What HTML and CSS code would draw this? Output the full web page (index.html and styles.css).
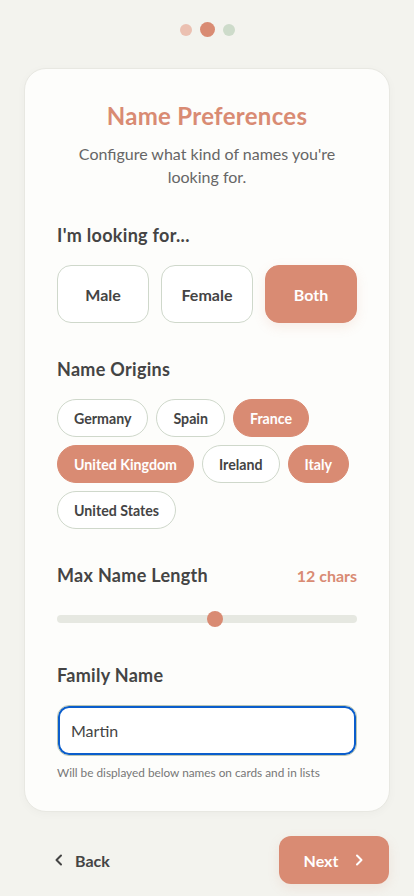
FILE: index.html
```html
<!DOCTYPE html>
<html lang="en">
<head>
    <meta charset="UTF-8">
    <meta name="viewport" content="width=device-width, initial-scale=1.0">
    <title>Name Preferences</title>
    <link rel="stylesheet" href="styles.css">
</head>
<body>
    <div class="steps">
        <span class="dot done"></span>
        <span class="dot current"></span>
        <span class="dot"></span>
    </div>

    <div class="card">
        <h1>Name Preferences</h1>
        <p class="subtitle">Configure what kind of names you're looking for.</p>

        <div class="section">
            <h2>I'm looking for...</h2>
            <div class="gender-options">
                <button class="gender-btn">Male</button>
                <button class="gender-btn">Female</button>
                <button class="gender-btn active">Both</button>
            </div>
        </div>

        <div class="section">
            <h2>Name Origins</h2>
            <div class="chips">
                <button class="chip">Germany</button>
                <button class="chip">Spain</button>
                <button class="chip active">France</button>
                <button class="chip active">United Kingdom</button>
                <button class="chip">Ireland</button>
                <button class="chip active">Italy</button>
                <button class="chip">United States</button>
            </div>
        </div>

        <div class="section">
            <div class="section-head">
                <h2>Max Name Length</h2>
                <span class="length-value" id="length-value">12 chars</span>
            </div>
            <input type="range" class="slider" id="length" min="3" max="20" value="12">
        </div>

        <div class="section family">
            <h2>Family Name</h2>
            <input type="text" class="text-input" value="Martin">
            <p class="hint">Will be displayed below names on cards and in lists</p>
        </div>
    </div>

    <div class="footer">
        <button class="back-btn">
            <svg width="14" height="14" viewBox="0 0 14 14"><polyline points="9,2.5 4.5,7 9,11.5" fill="none" stroke="currentColor" stroke-width="2" stroke-linecap="round" stroke-linejoin="round"/></svg>
            Back
        </button>
        <button class="next-btn">
            Next
            <svg width="14" height="14" viewBox="0 0 14 14"><polyline points="5,2.5 9.5,7 5,11.5" fill="none" stroke="currentColor" stroke-width="2" stroke-linecap="round" stroke-linejoin="round"/></svg>
        </button>
    </div>

    <script>
        // Keep the length label in sync with the slider
        const lengthInput = document.getElementById('length');
        const lengthValue = document.getElementById('length-value');
        lengthInput.addEventListener('input', () => {
            lengthValue.textContent = `${lengthInput.value} chars`;
        });
    </script>
</body>
</html>
```

FILE: styles.css
```css
body {
    font-family: 'Lato', 'Noto Sans', sans-serif;
    background-color: #f3f3ee;
    margin: 0;
    padding: 22px 24px 12px;
    color: #444;
}

button {
    font-family: inherit;
    cursor: pointer;
}

.steps {
    display: flex;
    justify-content: center;
    align-items: center;
    gap: 8px;
    height: 15px;
    margin-bottom: 31px;
}

.dot {
    width: 12px;
    height: 12px;
    border-radius: 50%;
    background-color: #cddbca;
}

.dot.done {
    background-color: #ebc0b1;
}

.dot.current {
    width: 15px;
    height: 15px;
    background-color: #d98b73;
}

.card {
    background-color: #fdfdfb;
    border: 1px solid #e8e8e2;
    border-radius: 22px;
    padding: 32px 32px 30px;
    box-shadow: 0 2px 10px rgba(0, 0, 0, 0.03);
}

h1 {
    margin: 0;
    text-align: center;
    color: #d98b73;
    font-size: 24px;
    font-weight: 700;
    line-height: 30px;
    letter-spacing: 0.3px;
}

.subtitle {
    margin: 11px 4px 0;
    text-align: center;
    color: #666;
    font-size: 16px;
    line-height: 23px;
}

.section {
    margin-top: 34px;
}

.section:first-of-type {
    margin-top: 35px;
}

h2 {
    margin: 0 0 18px;
    font-size: 18px;
    font-weight: 700;
    line-height: 24px;
    color: #444;
    letter-spacing: 0.3px;
}

.gender-options {
    display: grid;
    grid-template-columns: repeat(3, 1fr);
    gap: 12px;
}

.gender-btn {
    height: 58px;
    background-color: #fff;
    border: 1px solid #cfd8cb;
    border-radius: 14px;
    font-size: 16px;
    font-weight: 700;
    color: #444;
}

.gender-btn.active,
.chip.active {
    background-color: #d98b73;
    border-color: #d98b73;
    color: #fff;
}

.gender-btn.active {
    box-shadow: 0 4px 12px rgba(217, 139, 115, 0.15);
}

.chips {
    display: flex;
    flex-wrap: wrap;
    gap: 8px;
}

.chip {
    height: 38px;
    padding: 0 16px;
    background-color: #fff;
    border: 1px solid #cfd8cb;
    border-radius: 19px;
    font-size: 14.2px;
    font-weight: 700;
    color: #444;
}

.section-head {
    display: flex;
    justify-content: space-between;
    align-items: baseline;
}

.section-head h2 {
    margin-bottom: 0;
}

.length-value {
    color: #d98b73;
    font-size: 16px;
    font-weight: 700;
}

.slider {
    -webkit-appearance: none;
    appearance: none;
    display: block;
    width: 100%;
    height: 16px;
    margin: 24px 0 0;
    background: transparent;
}

.slider::-webkit-slider-runnable-track {
    height: 8px;
    border-radius: 4px;
    background-color: #e6e8e1;
}

.slider::-webkit-slider-thumb {
    -webkit-appearance: none;
    width: 16px;
    height: 16px;
    margin-top: -4px;
    border-radius: 50%;
    background-color: #d98b73;
    border: none;
}

.family {
    margin-top: 36px;
}

.text-input {
    display: block;
    box-sizing: border-box;
    width: 100%;
    height: 51px;
    padding: 0 13px;
    font-family: inherit;
    font-size: 16px;
    color: #444;
    background-color: #fff;
    border: 1px solid #b9c6b5;
    border-radius: 12px;
    box-shadow: inset 0 0 0 2px #0a5dcc;
    outline: none;
}

.hint {
    margin: 9px 0 0;
    font-size: 11.8px;
    line-height: 16px;
    color: #777;
}

.footer {
    display: flex;
    justify-content: space-between;
    align-items: center;
    margin-top: 24px;
}

.back-btn {
    display: flex;
    align-items: center;
    gap: 9px;
    padding: 0 0 0 28px;
    background: none;
    border: none;
    font-size: 16px;
    font-weight: 700;
    color: #444;
}

.next-btn {
    display: flex;
    align-items: center;
    justify-content: center;
    gap: 14px;
    width: 110px;
    height: 48px;
    margin-right: 1px;
    padding-left: 8px;
    background-color: #d98b73;
    border: none;
    border-radius: 12px;
    font-size: 16px;
    font-weight: 700;
    color: #fff;
    box-shadow: 0 4px 12px rgba(217, 139, 115, 0.15);
}
```
